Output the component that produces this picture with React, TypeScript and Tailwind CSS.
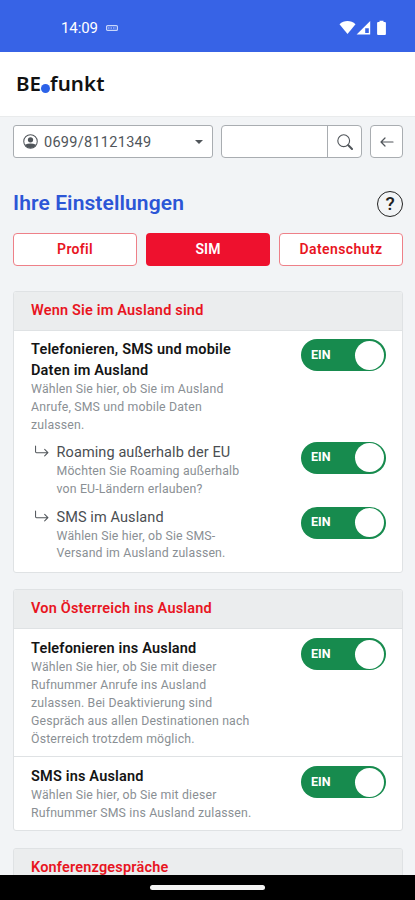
import type { ReactNode } from "react";
import clsx from "clsx";

function Toggle() {
  return (
    <button className="flex h-8 w-[85px] shrink-0 items-center justify-between rounded-full bg-[#178b4e] pl-[10.5px] pr-[1.5px]">
      <span className="text-[12.5px] font-bold text-white">EIN</span>
      <span className="h-[29px] w-[29px] rounded-full bg-white" />
    </button>
  );
}

function SubArrow() {
  return (
    <svg viewBox="0 0 16 16" className="mt-[3px] mr-[6.5px] ml-[4px] h-[15px] w-[15px] shrink-0" fill="none" stroke="#50555a" strokeWidth="1.1">
      <path d="M0.6 1.2v6q0 1 1 1h12M10.3 4.7l3.5 3.5-3.5 3.5" strokeLinecap="round" strokeLinejoin="round" />
    </svg>
  );
}

type SettingProps = {
  title: string[];
  lines: string[];
  sub?: boolean;
};

function Setting({ title, lines, sub }: SettingProps) {
  return (
    <div className="flex items-start justify-between pr-[16.5px] pl-[17px]">
      <div className="flex">
        {sub && <SubArrow />}
        <div className="whitespace-nowrap">
          <h3
            className={clsx(
              "text-[14.5px] leading-[21px]",
              sub ? "font-normal tracking-[0.1px] text-[#4a4e52]" : "font-semibold tracking-[0.18px] text-[#141414]"
            )}
          >
            {title.map((t) => (
              <span key={t} className="block">{t}</span>
            ))}
          </h3>
          <p className="text-[12.3px] leading-[17.9px] tracking-[0.17px] text-[#8a8f94]">
            {lines.map((l) => (
              <span key={l} className="block">{l}</span>
            ))}
          </p>
        </div>
      </div>
      <Toggle />
    </div>
  );
}

function Card({ title, className, children }: { title: string; className?: string; children?: ReactNode }) {
  return (
    <section className={clsx("shrink-0 overflow-hidden rounded-[3px] border border-[#dfe2e4] bg-white", className)}>
      <h2 className="flex h-[39px] items-center border-b border-[#dfe2e4] bg-[#ebedee] pl-[17px] text-[14.5px] font-semibold tracking-[0.18px] text-[#e8151f]">
        {title}
      </h2>
      {children}
    </section>
  );
}

export default function App() {
  return (
    <div className="flex h-[900px] w-[415px] flex-col overflow-hidden bg-[#f2f4f6] font-[Roboto,sans-serif]">
      <div className="flex h-[52px] shrink-0 items-center justify-between bg-[#3763e6] pt-[4px] pr-[28px] pl-[61px] text-white">
        <div className="flex items-center gap-2 pt-px">
          <span className="text-[15px] tracking-[-0.1px]">14:09</span>
          <svg width="12" height="6" viewBox="0 0 12 6" className="-mt-px" fill="none" stroke="#c8d6fb" strokeWidth="1.2">
            <rect x="0.6" y="0.6" width="10.8" height="4.8" rx="1" />
            <path d="M2 3h8" strokeDasharray="1.5 1" />
          </svg>
        </div>
        <svg width="48" height="16" viewBox="0 0 48 16" fill="#fff">
          <path d="M0.500 4.300C5-0.100 12-0.100 16.500 4.300L8.500 14z" />
          <path d="M31.200 1v13.600H17.600zM29.800 8.300h-3.600v4.800h3.600z" fillRule="evenodd" />
          <path d="M40.500 0.800h4v1.300h1.400q1 0 1 1v10.800q0 1-1 1h-6.800q-1 0-1-1V3.100q0-1 1-1h1.400z" />
        </svg>
      </div>

      <header className="flex h-[65px] shrink-0 items-center border-b border-[#e9ebec] bg-white pb-px pl-4 font-['Noto_Sans',sans-serif] text-[20.5px] font-semibold text-[#111]">
        <span>BE</span>
        <span className="mt-[9px] h-[9px] w-[9px] shrink-0 rounded-full bg-[#2c62e8]" />
        <span className="tracking-[0.1px]">funkt</span>
      </header>

      <main className="flex min-h-0 flex-1 flex-col overflow-hidden pt-[8px] pr-[12px] pl-[13px]">
        <div className="flex h-[33px] shrink-0 gap-2">
          <button className="flex w-[200px] items-center rounded-[3px] border border-[#a9adb1] bg-white pr-[9px] pl-[9px] text-[#50555a]">
            <svg width="15" height="15" viewBox="0 0 16 16" fill="currentColor">
              <circle cx="8" cy="8" r="7.200" fill="none" stroke="currentColor" strokeWidth="1.100" />
              <circle cx="8" cy="6.200" r="2.800" />
              <path d="M2 11.500Q8 9 14 11.500A7 7 0 0 1 8 15a7 7 0 0 1-6-3.500z" />
            </svg>
            <span className="mt-[2px] ml-[6px] text-[14.5px] tracking-[0.28px]">0699/81121349</span>
            <span className="ml-auto border-x-4 border-t-4 border-x-transparent border-t-[#50555a]" />
          </button>
          <div className="flex flex-1 rounded-[4px] border border-[#a9adb1] bg-white">
            <div className="flex-1 border-r border-[#a9adb1]" />
            <button className="flex w-[33px] items-center justify-center">
              <svg width="16" height="16" viewBox="0 0 16 16" fill="none" stroke="#50555a">
                <circle cx="6.700" cy="6.700" r="5.900" strokeWidth="1.100" />
                <path d="M11.300 11.300l3.700 3.700" strokeWidth="2" strokeLinecap="round" />
              </svg>
            </button>
          </div>
          <button className="flex w-[33px] items-center justify-center rounded-[4px] border border-[#a9adb1] bg-white">
            <svg width="14" height="10" viewBox="0 0 14 10" fill="none" stroke="#50555a" strokeWidth="1.200" strokeLinecap="round" strokeLinejoin="round">
              <path d="M13 5H1M5 1L1 5l4 4" />
            </svg>
          </button>
        </div>

        <div className="mt-[32px] flex h-[26px] shrink-0 items-center justify-between">
          <h1 className="pt-[2px] text-[21px] font-semibold tracking-[0.1px] text-[#2c56d6]">Ihre Einstellungen</h1>
          <span className="mt-px flex h-[26px] w-[26px] items-center justify-center rounded-full border-[1.5px] border-[#222]">
            <span className="text-[19px] leading-none font-medium text-[#222]">?</span>
          </span>
        </div>

        <nav className="mt-[17px] grid h-[33px] shrink-0 grid-cols-3 gap-[9px] text-[14px] font-semibold">
          <button className="rounded-[4px] border border-[#ee8088] bg-white tracking-[0.3px] text-[#e8151f]">Profil</button>
          <button className="rounded-[4px] bg-[#ee112e] text-white">SIM</button>
          <button className="rounded-[4px] border border-[#ee8088] bg-white tracking-[0.4px] text-[#e8151f]">Datenschutz</button>
        </nav>

        <Card title="Wenn Sie im Ausland sind" className="mt-[25px] h-[282px]">
          <div className="flex flex-col gap-2 pt-2">
            <Setting
              title={["Telefonieren, SMS und mobile", "Daten im Ausland"]}
              lines={["Wählen Sie hier, ob Sie im Ausland", "Anrufe, SMS und mobile Daten", "zulassen."]}
            />
            <div className="-mt-px flex flex-col gap-2">
              <Setting
                sub
                title={["Roaming außerhalb der EU"]}
                lines={["Möchten Sie Roaming außerhalb", "von EU-Ländern erlauben?"]}
              />
              <Setting
                sub
                title={["SMS im Ausland"]}
                lines={["Wählen Sie hier, ob Sie SMS-", "Versand im Ausland zulassen."]}
              />
            </div>
          </div>
        </Card>

        <Card title="Von Österreich ins Ausland" className="mt-4 h-[242px]">
          <div className="h-[128px] border-b border-[#dfe2e4] pt-[9px]">
            <Setting
              title={["Telefonieren ins Ausland"]}
              lines={[
                "Wählen Sie hier, ob Sie mit dieser",
                "Rufnummer Anrufe ins Ausland",
                "zulassen. Bei Deaktivierung sind",
                "Gespräch aus allen Destinationen nach",
                "Österreich trotzdem möglich.",
              ]}
            />
          </div>
          <div className="pt-[9px]">
            <Setting
              title={["SMS ins Ausland"]}
              lines={["Wählen Sie hier, ob Sie mit dieser", "Rufnummer SMS ins Ausland zulassen."]}
            />
          </div>
        </Card>

        <Card title="Konferenzgespräche" className="mt-[17px]" />
      </main>

      <footer className="flex h-[25px] shrink-0 items-center justify-center bg-black">
        <span className="h-[5px] w-[115px] rounded-full bg-[#f4f4f4]" />
      </footer>
    </div>
  );
}
